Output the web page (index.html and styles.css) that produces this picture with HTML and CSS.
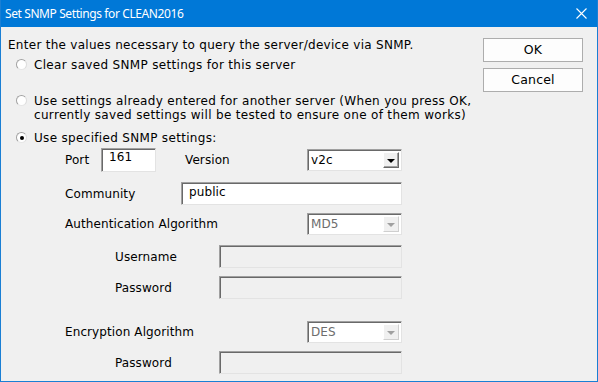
FILE: index.html
```html
<!DOCTYPE html>
<html>
<head>
<meta charset="utf-8">
<link rel="stylesheet" href="styles.css">
</head>
<body>
<div class="window">
  <div class="titlebar">
    <span class="title">Set SNMP Settings for CLEAN2016</span>
    <svg class="close" width="11" height="11" viewBox="0 0 11 11"><path d="M0.5 0.5 L10.5 10.5 M10.5 0.5 L0.5 10.5" stroke="#fff" stroke-width="1.1" fill="none"/></svg>
  </div>
  <div class="content">
    <div class="main">
      <div class="intro">Enter the values necessary to query the server/device via SNMP.</div>
      <div class="radio r1"><span class="dot"></span><span class="rlabel">Clear saved SNMP settings for this server</span></div>
      <div class="radio r2"><span class="dot"></span><span class="rlabel">Use settings already entered for another server (When you press OK,<br>currently saved settings will be tested to ensure one of them works)</span></div>
      <div class="radio r3"><span class="dot checked"></span><span class="rlabel">Use specified SNMP settings:</span></div>

      <div class="row row-port">
        <span class="lbl w-port">Port</span>
        <span class="input port-in">161</span>
        <span class="lbl w-version">Version</span>
        <span class="select"><span class="sval">v2c</span><span class="sbtn"><span class="tri"></span></span></span>
      </div>
      <div class="row row-comm">
        <span class="lbl w-comm">Community</span>
        <span class="input comm-in">public</span>
      </div>
      <div class="row row-auth">
        <span class="lbl w-algo">Authentication Algorithm</span>
        <span class="select disabled"><span class="sval">MD5</span><span class="sbtn"><span class="tri"></span></span></span>
      </div>
      <div class="row row-user indent">
        <span class="lbl w-sub">Username</span>
        <span class="input disabled sub-in"></span>
      </div>
      <div class="row row-pass indent">
        <span class="lbl w-sub">Password</span>
        <span class="input disabled sub-in"></span>
      </div>
      <div class="row row-enc">
        <span class="lbl w-algo">Encryption Algorithm</span>
        <span class="select disabled"><span class="sval">DES</span><span class="sbtn"><span class="tri"></span></span></span>
      </div>
      <div class="row row-pass2 indent">
        <span class="lbl w-sub">Password</span>
        <span class="input disabled sub-in"></span>
      </div>
    </div>
    <div class="buttons">
      <div class="btn">OK</div>
      <div class="btn">Cancel</div>
    </div>
  </div>
</div>
</body>
</html>
```

FILE: styles.css
```css
html, body {
  margin: 0;
  padding: 0;
  background: #f0f0f0;
}
.window {
  width: 598px;
  height: 382px;
  box-sizing: border-box;
  border: 1px solid #1a7fd4;
  border-top: none;
  background: #f0f0f0;
  font-family: "DejaVu Sans", Verdana, sans-serif;
  font-size: 12px;
  color: #000;
  overflow: hidden;
}
.titlebar {
  height: 27px;
  margin: 0 -1px;
  background: #0078d7;
  color: #fff;
  display: flex;
  align-items: center;
  justify-content: space-between;
  padding: 0 11px 0 5px;
}
.title {
  font-family: "Noto Sans", "Open Sans", sans-serif;
  font-size: 12px;
  letter-spacing: -0.4px;
  line-height: 16px;
}
.close {
  display: block;
}
.content {
  display: flex;
  justify-content: space-between;
}
.main {
  padding-left: 7px;
}
.intro {
  margin-top: 10px;
  line-height: 16px;
  letter-spacing: 0.28px;
}
.radio {
  display: flex;
  align-items: flex-start;
  line-height: 14px;
  margin-left: 8px;
  letter-spacing: 0.32px;
}
.r1 { margin-top: 5px; }
.r2 { margin-top: 22px; }
.r3 { margin-top: 9px; }
.dot {
  width: 11px;
  height: 11px;
  box-sizing: border-box;
  border-radius: 50%;
  border: 1px solid #8f8f8f;
  border-color: #a2a2a2 #dcdcdc #e6e6e6 #a2a2a2;
  background: #fff;
  margin: 1px 7px 0 0;
  flex: none;
  position: relative;
}
.dot.checked::after {
  content: "";
  position: absolute;
  left: 2.5px;
  top: 2.5px;
  width: 4px;
  height: 4px;
  border-radius: 50%;
  background: #000;
}
.row {
  display: flex;
  align-items: center;
  padding-left: 57px;
  letter-spacing: 0.1px;
}
.row.indent { padding-left: 107px; }
.lbl { flex: none; }
.w-port { width: 36px; }
.w-version { width: 122px; margin-left: 29px; }
.w-comm { width: 116px; }
.w-algo { width: 242px; }
.w-sub { width: 104px; }

.row-port { margin-top: 3px; height: 24px; }
.row-comm { margin-top: 10px; height: 23px; }
.row-auth { margin-top: 8px; height: 22px; }
.row-user { margin-top: 10px; height: 23px; }
.row-pass { margin-top: 8px; height: 23px; }
.row-enc { margin-top: 22px; height: 22px; }
.row-pass2 { margin-top: 8px; height: 23px; }

.input {
  box-sizing: border-box;
  height: 23px;
  background: #fff;
  border: 1px solid;
  border-color: #a0a0a0 #e3e3e3 #e3e3e3 #a0a0a0;
  box-shadow: inset 1px 1px 0 #696969;
  padding: 2px 0 0 7px;
  line-height: 15px;
  font-size: 12px;
}
.port-in { width: 55px; height: 24px; padding-top: 1px; }
.comm-in { width: 221px; }
.sub-in { width: 183px; }
.input.disabled { background: #f0f0f0; }

.select {
  box-sizing: border-box;
  width: 95px;
  height: 22px;
  display: flex;
  background: #fff;
  border: 1px solid;
  border-color: #a0a0a0 #e3e3e3 #e3e3e3 #a0a0a0;
  box-shadow: inset 1px 1px 0 #696969;
  padding: 2px 2px 2px 3px;
  font-size: 12px;
}
.sval {
  flex: 1;
  line-height: 16px;
}
.select.disabled .sval { color: #6d6d6d; }
.sbtn {
  width: 16px;
  height: 16px;
  box-sizing: border-box;
  background: #f0f0f0;
  border: 1px solid;
  border-color: #fff #696969 #696969 #fff;
  box-shadow: inset -1px -1px 0 #a0a0a0;
  display: flex;
  align-items: center;
  justify-content: center;
}
.select.disabled .sbtn {
  border-color: #fff #cfcfcf #cfcfcf #fff;
  box-shadow: none;
}
.tri {
  width: 0;
  height: 0;
  border-left: 4px solid transparent;
  border-right: 4px solid transparent;
  border-top: 4px solid #000;
  margin-top: 1px;
}
.select.disabled .tri { border-top-color: #a0a0a0; }

.buttons {
  width: 100px;
  margin-right: 14px;
  padding-top: 11px;
  display: flex;
  flex-direction: column;
  gap: 6px;
}
.btn {
  box-sizing: border-box;
  height: 24px;
  border: 1px solid #adadad;
  background: #fdfdfd;
  text-align: center;
  font-size: 12.5px;
  letter-spacing: 0.2px;
  line-height: 21px;
  color: #000;
}
```
